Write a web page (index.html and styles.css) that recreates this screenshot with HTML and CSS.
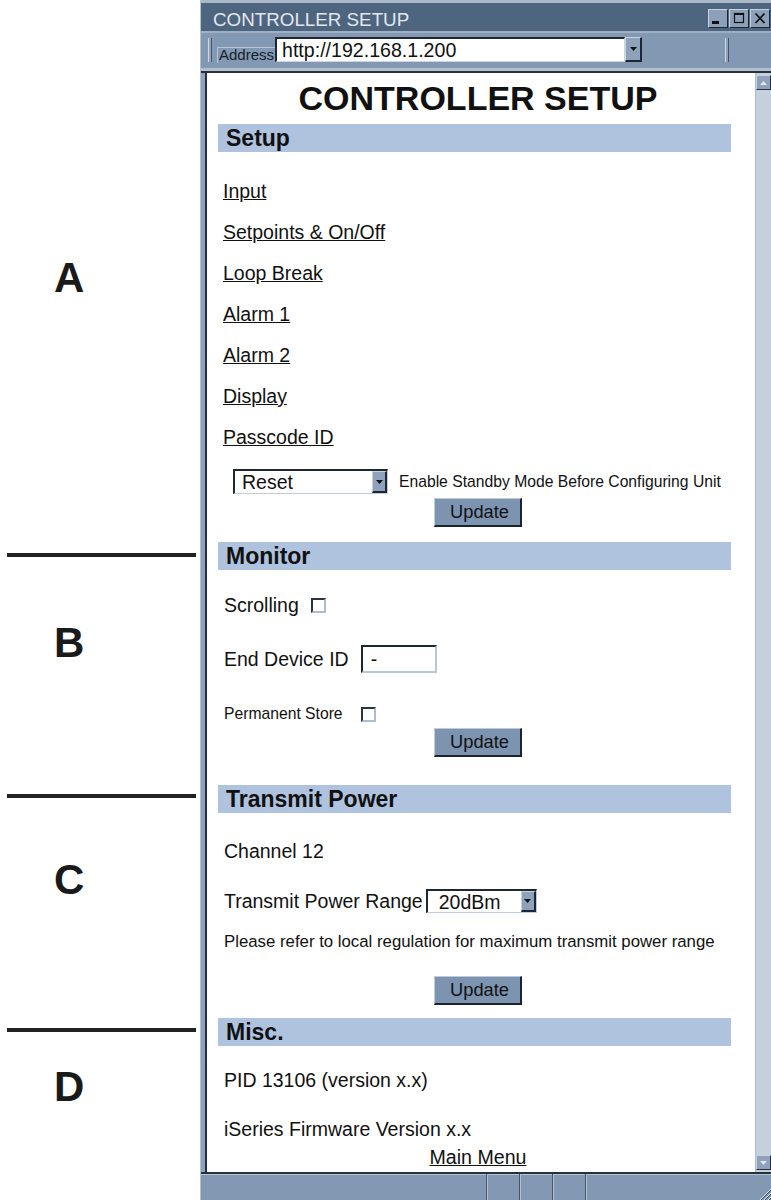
FILE: index.html
```html
<!DOCTYPE html>
<html lang="en">
<head>
    <meta charset="UTF-8">
    <meta name="viewport" content="width=device-width, initial-scale=1.0">
    <title>Controller Setup</title>
    <link rel="stylesheet" href="styles.css">
</head>
<body>
<div class="page">
    <!-- section markers on the left of the browser window -->
    <aside class="legend">
        <div class="legend-letter letter-a">A</div>
        <div class="legend-rule rule-1"></div>
        <div class="legend-letter letter-b">B</div>
        <div class="legend-rule rule-2"></div>
        <div class="legend-letter letter-c">C</div>
        <div class="legend-rule rule-3"></div>
        <div class="legend-letter letter-d">D</div>
    </aside>

    <div class="window">
        <div class="titlebar">
            <span class="title">CONTROLLER SETUP</span>
            <div class="win-buttons">
                <span class="win-btn">
                    <svg width="18" height="17" viewBox="0 0 18 17"><rect x="3" y="11" width="7" height="3" fill="#111"/></svg>
                </span>
                <span class="win-btn">
                    <svg width="18" height="17" viewBox="0 0 18 17"><rect x="4.5" y="3.5" width="9" height="9" fill="none" stroke="#111" stroke-width="1.2"/><rect x="4" y="3" width="10" height="2" fill="#111"/></svg>
                </span>
                <span class="win-btn">
                    <svg width="18" height="17" viewBox="0 0 18 17"><path d="M4.5 3.5 L13.5 13 M13.5 3.5 L4.5 13" stroke="#111" stroke-width="1.8"/></svg>
                </span>
            </div>
        </div>

        <div class="addressbar">
            <span class="grip"></span>
            <span class="address-label">Address</span>
            <div class="url-field">http://192.168.1.200</div>
            <span class="drop-btn">
                <svg width="7" height="4" viewBox="0 0 7 4"><polygon points="0,0 7,0 3.5,4" fill="#111"/></svg>
            </span>
            <span class="grip grip-right"></span>
        </div>

        <div class="viewport">
            <main class="content">
                <h1 class="page-title">CONTROLLER SETUP</h1>

                <section class="panel panel-setup">
                    <h2 class="panel-bar">Setup</h2>
                    <ul class="menu-links">
                        <li><a href="#">Input</a></li>
                        <li><a href="#">Setpoints &amp; On/Off</a></li>
                        <li><a href="#">Loop Break</a></li>
                        <li><a href="#">Alarm 1</a></li>
                        <li><a href="#">Alarm 2</a></li>
                        <li><a href="#">Display</a></li>
                        <li><a href="#">Passcode ID</a></li>
                    </ul>
                    <div class="reset-row">
                        <div class="select select-reset">
                            <select><option>Reset</option></select>
                            <span class="select-arrow">
                                <svg width="7" height="4" viewBox="0 0 7 4"><polygon points="0,0 7,0 3.5,4" fill="#111"/></svg>
                            </span>
                        </div>
                        <span class="note">Enable Standby Mode Before Configuring Unit</span>
                    </div>
                    <div class="btn-row"><button class="btn">Update</button></div>
                </section>

                <section class="panel panel-monitor">
                    <h2 class="panel-bar">Monitor</h2>
                    <div class="field-row row-scrolling">
                        <span>Scrolling</span>
                        <input type="checkbox" class="check">
                    </div>
                    <div class="field-row row-device">
                        <span>End Device ID</span>
                        <input type="text" class="text-field" value="-">
                    </div>
                    <div class="field-row row-store">
                        <span>Permanent Store</span>
                        <input type="checkbox" class="check">
                    </div>
                    <div class="btn-row"><button class="btn">Update</button></div>
                </section>

                <section class="panel panel-transmit">
                    <h2 class="panel-bar">Transmit Power</h2>
                    <div class="field-row row-channel">Channel 12</div>
                    <div class="field-row row-range">
                        <span>Transmit Power Range</span>
                        <div class="select select-range">
                            <select><option>20dBm</option></select>
                            <span class="select-arrow">
                                <svg width="7" height="4" viewBox="0 0 7 4"><polygon points="0,0 7,0 3.5,4" fill="#111"/></svg>
                            </span>
                        </div>
                    </div>
                    <div class="field-row row-notice">Please refer to local regulation for maximum transmit power range</div>
                    <div class="btn-row"><button class="btn">Update</button></div>
                </section>

                <section class="panel panel-misc">
                    <h2 class="panel-bar">Misc.</h2>
                    <div class="field-row row-pid">PID 13106 (version x.x)</div>
                    <div class="field-row row-firmware">iSeries Firmware Version x.x</div>
                    <div class="main-menu-row"><a href="#">Main Menu</a></div>
                </section>
            </main>

            <div class="scrollbar">
                <span class="scroll-btn">
                    <svg width="7" height="4" viewBox="0 0 7 4"><polygon points="0,4 7,4 3.5,0" fill="#e3e8ef"/></svg>
                </span>
                <span class="scroll-btn">
                    <svg width="7" height="4" viewBox="0 0 7 4"><polygon points="0,0 7,0 3.5,4" fill="#e3e8ef"/></svg>
                </span>
            </div>
        </div>

        <div class="statusbar">
            <span class="status-cell cell-main"></span>
            <span class="status-cell cell-small"></span>
            <span class="status-cell cell-small"></span>
            <span class="status-cell cell-small"></span>
            <span class="status-cell cell-last">
                <svg class="resize-grip" width="12" height="12" viewBox="0 0 12 12">
                    <path d="M1 12 L12 1 M5 12 L12 5 M9 12 L12 9" stroke="#dfe6ee" stroke-width="1"/>
                    <path d="M2 12 L12 2 M6 12 L12 6 M10 12 L12 10" stroke="#3c4b5e" stroke-width="1"/>
                </svg>
            </span>
        </div>
    </div>
</div>
</body>
</html>
```

FILE: styles.css
```css
* {
    box-sizing: border-box;
}

body {
    margin: 0;
    background-color: #fff;
    font-family: "Liberation Sans", Arial, sans-serif;
    color: #111;
}

.page {
    display: flex;
    width: 771px;
    height: 1200px;
    overflow: hidden;
}

/* left legend */
.legend {
    width: 200px;
    flex: none;
    display: flex;
    flex-direction: column;
    padding-left: 7px;
}

.legend-letter {
    font-size: 42px;
    line-height: 42px;
    font-weight: bold;
    padding-left: 47px;
    color: #1a1a1a;
}

.legend-rule {
    width: 189px;
    height: 4px;
    background-color: #222;
}

.letter-a { margin-top: 257px; }
.rule-1 { margin-top: 254px; }
.letter-b { margin-top: 65px; }
.rule-2 { margin-top: 130px; }
.letter-c { margin-top: 61px; }
.rule-3 { margin-top: 127px; }
.letter-d { margin-top: 34px; }

/* browser window */
.window {
    flex: 1;
    display: flex;
    flex-direction: column;
    background-color: #8398b2;
    border-left: 1px solid #b4c1d0;
}

.titlebar {
    height: 33px;
    flex: none;
    display: flex;
    justify-content: space-between;
    align-items: flex-start;
    padding-left: 12px;
    background-color: #4e6580;
    border-top: 3px solid #aab8c8;
    border-bottom: 2px solid #9fb0c3;
}

.title {
    margin-top: 7px;
    font-size: 18.8px;
    line-height: 20px;
    color: #e2e7ee;
}

.win-buttons {
    display: flex;
    gap: 1px;
    margin-top: 6px;
    margin-right: 1px;
}

.win-btn {
    width: 20px;
    height: 19px;
    display: flex;
    align-items: center;
    justify-content: center;
    background-color: #8ca0b9;
    border: 1px solid;
    border-color: #c9d3de #1e2731 #1e2731 #c9d3de;
}

.addressbar {
    height: 40px;
    flex: none;
    display: flex;
    align-items: flex-start;
    padding-top: 4px;
    box-shadow: inset 0 -2px 0 #27313d, inset 0 -5px 0 #b3c0cf;
}

.grip {
    width: 4px;
    height: 24px;
    margin: 1px 0 0 7px;
    background-color: #8ea3bb;
    border-left: 1px solid #cbd5e0;
    border-right: 1px solid #44556b;
}

.grip-right {
    margin-left: 83px;
}

.address-label {
    width: 58px;
    height: 16px;
    margin: 10px 0 0 5px;
    padding-left: 1px;
    font-size: 15px;
    line-height: 13px;
    color: #18212b;
    border-top: 1px solid #b7c4d3;
    border-left: 1px solid #b7c4d3;
}

.url-field {
    width: 350px;
    height: 25px;
    padding-left: 5px;
    background-color: #fff;
    font-size: 19.6px;
    line-height: 22px;
    border: 2px solid;
    border-color: #1f2832 #cdd6e0 #cdd6e0 #1f2832;
    border-right-width: 1px;
    border-bottom-width: 1px;
}

.drop-btn {
    width: 17px;
    height: 25px;
    display: flex;
    align-items: center;
    justify-content: center;
    background-color: #8ea3bb;
    border: 1px solid;
    border-color: #c9d3de #1e2731 #1e2731 #c9d3de;
    border-right-width: 2px;
    border-bottom-width: 2px;
}

.viewport {
    height: 1099px;
    flex: none;
    display: flex;
    border-left: 4px solid #8ea3bb;
}

.content {
    width: 550px;
    height: 100%;
    overflow: hidden;
    padding: 0 17px 0 11px;
    background-color: #fff;
    border-left: 2px solid #27313d;
}

.scrollbar {
    width: 16px;
    display: flex;
    flex-direction: column;
    justify-content: space-between;
    padding: 2px 0;
    background-color: #c6d0dc;
    border-left: 1px solid #aebccc;
}

.scroll-btn {
    height: 15px;
    display: flex;
    align-items: center;
    justify-content: center;
    background-color: #8ea3bb;
    border: 1px solid;
    border-color: #c9d3de #27313d #27313d #c9d3de;
}

.statusbar {
    flex: 1;
    display: flex;
    border-top: 2px solid #27313d;
    box-shadow: inset 0 1px 0 #b5c2d1;
}

.status-cell {
    border-left: 1px solid #b3c1d1;
    border-right: 1px solid #44556b;
}

.cell-main {
    width: 286px;
    border-left: none;
}

.cell-small {
    width: 33px;
}

.cell-last {
    flex: 1;
    position: relative;
    border-right: none;
}

.resize-grip {
    position: absolute;
    right: 0;
    bottom: 0;
}

/* page content */
.page-title {
    margin: 8px 0 0;
    font-size: 34px;
    line-height: 34px;
    font-weight: bold;
    text-align: center;
}

.panel-bar {
    height: 28px;
    margin: 0 7px 0 0;
    padding-left: 8px;
    background-color: #afc3de;
    font-size: 23px;
    line-height: 28px;
    font-weight: bold;
}

.panel-setup { margin-top: 9px; }
.panel-monitor { margin-top: 15px; }
.panel-transmit { margin-top: 28px; }
.panel-misc { margin-top: 13px; }

a {
    color: #111;
    text-decoration: underline;
}

.menu-links {
    list-style: none;
    margin: 19px 0 0;
    padding: 0 0 0 5px;
}

.menu-links li {
    height: 41px;
    font-size: 19.5px;
    line-height: 41px;
}

.reset-row {
    display: flex;
    align-items: center;
    margin-top: 11px;
    padding-left: 15px;
}

.select {
    display: flex;
    background-color: #fff;
    border: 2px solid;
    border-color: #1f2832 #c3cdd9 #c3cdd9 #1f2832;
    border-right-width: 1px;
    border-bottom-width: 1px;
}

.select select {
    flex: 1;
    min-width: 0;
    appearance: none;
    border: none;
    background: transparent;
    padding: 0 0 0 7px;
    font: 19.5px "Liberation Sans", Arial, sans-serif;
    color: #111;
}

.select-arrow {
    width: 15px;
    display: flex;
    align-items: center;
    justify-content: center;
    background-color: #8ea3bb;
    border: 1px solid;
    border-color: #c9d3de #1e2731 #1e2731 #c9d3de;
    border-right-width: 2px;
    border-bottom-width: 2px;
}

.select-reset {
    width: 155px;
    height: 25px;
}

.select-range {
    width: 111px;
    height: 24px;
    margin-left: 3px;
}

.select-range select {
    padding-left: 11px;
}

.note {
    margin-left: 11px;
    font-size: 15.7px;
}

.btn-row {
    display: flex;
    justify-content: center;
}

.panel-setup .btn-row { margin-top: 4px; }
.panel-transmit .btn-row { margin-top: 22px; }

.btn {
    width: 88px;
    height: 29px;
    padding: 0 0 0 4px;
    background-color: #7d94b1;
    font: 18.3px "Liberation Sans", Arial, sans-serif;
    color: #111;
    border: 1px solid;
    border-color: #c0ccda #1b232d #1b232d #c0ccda;
    border-right-width: 2px;
    border-bottom-width: 2px;
}

.field-row {
    display: flex;
    align-items: center;
    padding-left: 6px;
    font-size: 19.5px;
}

.row-scrolling { margin-top: 20px; height: 30px; }
.row-device { margin-top: 25px; height: 28px; }
.row-store { margin-top: 27px; height: 28px; font-size: 15.7px; }
.row-channel { margin-top: 23px; height: 30px; }
.row-range { margin-top: 23px; height: 24px; }
.row-notice { margin-top: 17px; height: 24px; font-size: 16.8px; }
.row-pid { margin-top: 19px; height: 30px; }
.row-firmware { margin-top: 19px; height: 30px; }

.check {
    appearance: none;
    width: 15px;
    height: 15px;
    margin: 0 0 0 12px;
    background-color: #fff;
    border: 2px solid;
    border-color: #2a3440 #aebdcd #aebdcd #2a3440;
}

.row-store .check {
    margin-left: 18px;
}

.text-field {
    width: 76px;
    height: 28px;
    margin-left: 12px;
    padding: 0 0 0 8px;
    font: 19.5px "Liberation Sans", Arial, sans-serif;
    color: #111;
    border: 2px solid;
    border-color: #1f2832 #b9c6d4 #b9c6d4 #1f2832;
}

.main-menu-row {
    height: 26px;
    text-align: center;
    font-size: 19.6px;
    line-height: 26px;
}
```
